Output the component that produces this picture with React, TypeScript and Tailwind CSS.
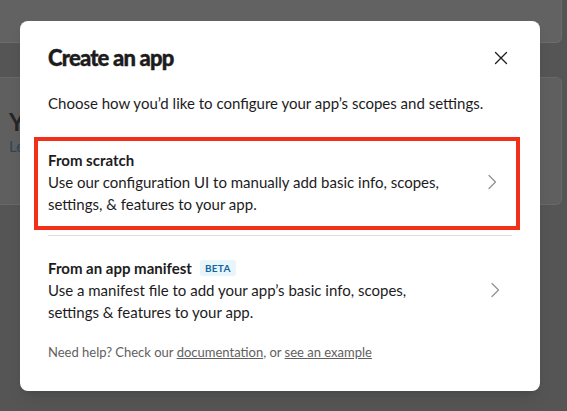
import React from "react";

const Chevron = () => (
  <svg width="10" height="16" viewBox="0 0 10 16" fill="none" className="shrink-0">
    <path d="M2 1.5 L8.5 8 L2 14.5" stroke="#8f8f8f" strokeWidth="1.2" strokeLinecap="round" strokeLinejoin="round" />
  </svg>
);

const CloseIcon = () => (
  <svg width="14" height="14" viewBox="0 0 14 14" fill="none">
    <path d="M1.5 1.5 L12.5 12.5 M12.5 1.5 L1.5 12.5" stroke="#1d1c1d" strokeWidth="1.3" strokeLinecap="round" />
  </svg>
);

const App = () => {
  return (
    <div className="relative w-full h-[411px] overflow-hidden bg-[#555555] font-['Lato','Liberation_Sans',sans-serif]">
      {/* page behind the overlay */}
      <div className="h-[43px] mr-[5px] bg-[#626262] border-b border-r border-[#6c6c6c] rounded-br-md" />
      <div className="mt-[34px] h-[128px] mr-[5px] bg-[#5f5f5f] border-y border-r border-[#686868] rounded-r-md pl-[9px] pt-[30px]">
        <p className="text-[24px] font-bold text-[#262626] leading-[28px]">Your Apps</p>
        <p className="text-[15px] text-[#2e4656] leading-[22px] mt-[-1px]">Learn more</p>
      </div>

      {/* modal */}
      <div className="absolute left-[20px] top-[21px] w-[520px] h-[370px] bg-white rounded-lg shadow-lg">
        <div className="flex items-center justify-between h-[32px] mt-[20px] pl-[28px] pr-[32px]">
          <h1 className="text-[22px] font-black tracking-[-0.8px] text-[#1d1c1d] [-webkit-text-stroke:0.4px_#1d1c1d]">Create an app</h1>
          <button className="p-0 mt-[2px]">
            <CloseIcon />
          </button>
        </div>
        <p className="mt-[19px] pl-[28px] text-[15px] leading-[22px] text-[#1d1c1d]">
          Choose how you’d like to configure your app’s scopes and settings.
        </p>

        <div className="mt-[23px] ml-[14px] mr-[20px] border-[4px] border-[#f2301a] pl-[10px] pr-[19px] pt-[8px] pb-[11px] flex items-center justify-between">
          <div className="text-[15px] leading-[22px] text-[#1d1c1d]">
            <p className="font-bold">From scratch</p>
            <p>Use our configuration UI to manually add basic info, scopes,</p>
            <p>settings, &amp; features to your app.</p>
          </div>
          <Chevron />
        </div>
        <div className="ml-[28px] mr-[28px] mt-[5px] border-t border-[#dddddd]" />

        <div className="mt-[21px] pl-[28px] pr-[40px] flex items-center justify-between">
          <div className="text-[15px] leading-[22px] text-[#1d1c1d]">
            <p className="flex items-center gap-[8px]">
              <span className="font-bold">From an app manifest</span>
              <span className="bg-[#e8f5fa] text-[#1264a3] text-[10px] font-bold leading-[16px] px-[5px] rounded-[3px] tracking-[0.3px]">BETA</span>
            </p>
            <p>Use a manifest file to add your app’s basic info, scopes,</p>
            <p>settings &amp; features to your app.</p>
          </div>
          <Chevron />
        </div>

        <p className="mt-[20px] pl-[28px] text-[13px] leading-[18px] text-[#616061]">
          Need help? Check our <a className="underline">documentation</a>, or <a className="underline">see an example</a>
        </p>
      </div>
    </div>
  );
};

export default App;
